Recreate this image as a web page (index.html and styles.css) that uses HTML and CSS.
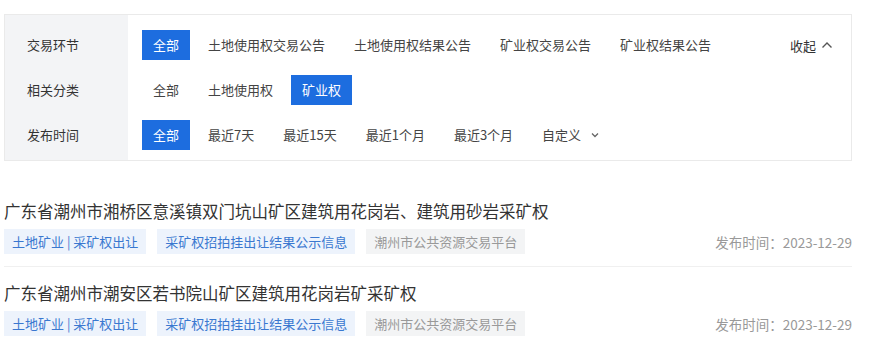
FILE: index.html
```html
<!DOCTYPE html>
<html lang="zh-CN">
<head>
<meta charset="utf-8">
<link rel="stylesheet" href="styles.css">
</head>
<body>
<div class="page">
  <div class="filter">
    <div class="labels">
      <div class="label">交易环节</div>
      <div class="label">相关分类</div>
      <div class="label">发布时间</div>
    </div>
    <div class="options">
      <div class="row">
        <span class="opt active">全部</span>
        <span class="opt">土地使用权交易公告</span>
        <span class="opt">土地使用权结果公告</span>
        <span class="opt">矿业权交易公告</span>
        <span class="opt">矿业权结果公告</span>
        <span class="collapse">收起
          <svg width="12" height="8" viewBox="0 0 12 8"><path d="M1.5 6.5 L6 2 L10.5 6.5" fill="none" stroke="#555" stroke-width="1.4"/></svg>
        </span>
      </div>
      <div class="row">
        <span class="opt">全部</span>
        <span class="opt">土地使用权</span>
        <span class="opt active">矿业权</span>
      </div>
      <div class="row">
        <span class="opt active">全部</span>
        <span class="opt">最近7天</span>
        <span class="opt">最近15天</span>
        <span class="opt">最近1个月</span>
        <span class="opt">最近3个月</span>
        <span class="opt custom">自定义
          <svg width="8" height="6" viewBox="0 0 8 6"><path d="M1 1.5 L4 4.5 L7 1.5" fill="none" stroke="#666" stroke-width="1.3"/></svg>
        </span>
      </div>
    </div>
  </div>

  <div class="list">
    <div class="item">
      <div class="title">广东省潮州市湘桥区意溪镇双门坑山矿区建筑用花岗岩、建筑用砂岩采矿权</div>
      <div class="meta">
        <span class="tag blue">土地矿业 | 采矿权出让</span>
        <span class="tag blue">采矿权招拍挂出让结果公示信息</span>
        <span class="tag gray">潮州市公共资源交易平台</span>
        <span class="date">发布时间：2023-12-29</span>
      </div>
    </div>
    <div class="item">
      <div class="title">广东省潮州市潮安区若书院山矿区建筑用花岗岩矿采矿权</div>
      <div class="meta">
        <span class="tag blue">土地矿业 | 采矿权出让</span>
        <span class="tag blue">采矿权招拍挂出让结果公示信息</span>
        <span class="tag gray">潮州市公共资源交易平台</span>
        <span class="date">发布时间：2023-12-29</span>
      </div>
    </div>
  </div>
</div>
</body>
</html>
```

FILE: styles.css
```css
* { box-sizing: border-box; }
body {
  margin: 0;
  background: #fff;
  font-family: "Noto Sans CJK SC", "Noto Sans", sans-serif;
  color: #333;
}
.page {
  width: 848px;
  margin: 14px 0 0 4px;
}
.filter {
  display: flex;
  border: 1px solid #eaeaea;
}
.labels {
  width: 123px;
  background: #f3f4f6;
  display: flex;
  flex-direction: column;
  gap: 15px;
  padding: 15px 0 10px 22px;
}
.label {
  height: 30px;
  line-height: 30px;
  font-size: 13px;
  color: #333;
}
.options {
  flex: 1;
  display: flex;
  flex-direction: column;
  gap: 15px;
  padding: 15px 18px 10px 14px;
}
.row {
  display: flex;
  align-items: center;
  gap: 7px;
  height: 30px;
}
.opt {
  height: 30px;
  line-height: 30px;
  padding: 0 11px;
  font-size: 13px;
  color: #444;
  white-space: nowrap;
}
.opt.active {
  background: #1d6ddf;
  color: #fff;
}
.custom {
  display: flex;
  align-items: center;
  gap: 10px;
}
.collapse {
  margin-left: auto;
  font-size: 13px;
  color: #333;
  display: flex;
  align-items: center;
  gap: 5px;
}
.list {
  margin-top: 24px;
}
.item {
  padding: 14px 0 12px;
  border-bottom: 1px solid #f0f0f0;
}
.item:last-child { border-bottom: none; }
.title {
  font-size: 16.5px;
  line-height: 24px;
  color: #333;
}
.meta {
  display: flex;
  align-items: center;
  gap: 11px;
  margin-top: 6px;
  height: 25px;
}
.tag {
  height: 25px;
  line-height: 25px;
  padding: 0 8px;
  font-size: 13px;
  white-space: nowrap;
}
.tag.blue {
  background: #edf3fc;
  color: #3a78d0;
}
.tag.gray {
  background: #f3f4f5;
  color: #999;
}
.date {
  margin-left: auto;
  font-size: 13.5px;
  color: #999;
}
```
